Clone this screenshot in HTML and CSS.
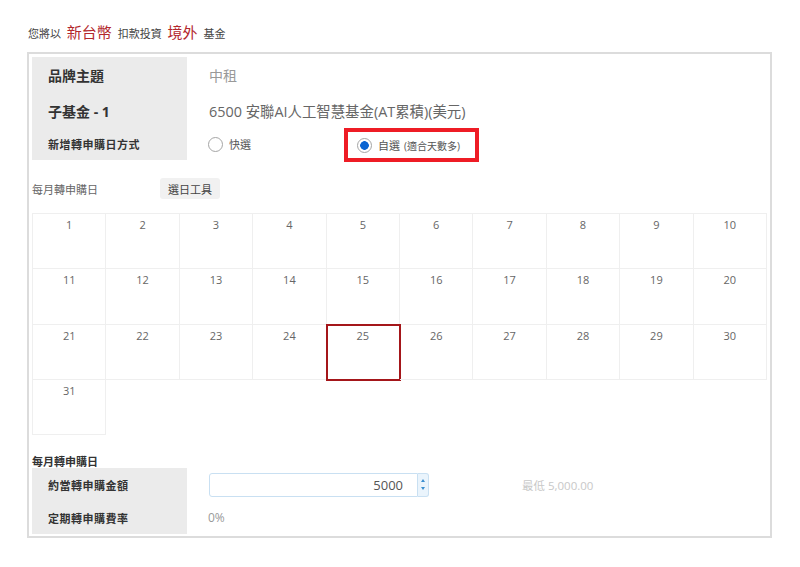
FILE: index.html
```html
<!DOCTYPE html>
<html lang="zh-Hant">
<head>
    <meta charset="UTF-8">
    <meta name="viewport" content="width=device-width, initial-scale=1.0">
    <title>定期轉申購</title>
    <link rel="stylesheet" href="styles.css">
</head>
<body>
    <!-- summary line -->
    <div class="summary">
        您將以 <span class="hl">新台幣</span> 扣款投資 <span class="hl">境外</span> 基金
    </div>

    <div class="box">
        <div class="info">
            <div class="info-row r1">
                <div class="label big">品牌主題</div>
                <div class="value light">中租</div>
            </div>
            <div class="info-row r2">
                <div class="label big">子基金 - 1</div>
                <div class="value fund">6500 安聯AI人工智慧基金(AT累積)(美元)</div>
            </div>
            <div class="info-row r3">
                <div class="label">新增轉申購日方式</div>
                <div class="value options">
                    <label class="opt"><span class="radio"></span>快選</label>
                    <label class="opt marked"><span class="radio on"></span>自選 <small>(適合天數多)</small></label>
                </div>
            </div>
        </div>

        <div class="day-bar">
            <span class="day-label">每月轉申購日</span>
            <button class="tool-btn">選日工具</button>
        </div>

        <div class="calendar" id="calendar"></div>

        <div class="sub-title">每月轉申購日</div>
        <div class="info">
            <div class="info-row r4">
                <div class="label">約當轉申購金額</div>
                <div class="value">
                    <div class="amount">
                        <span class="amount-val">5000</span>
                    </div>
                    <span class="spin"><i class="up"></i><i class="down"></i></span>
                    <span class="min">最低 5,000.00</span>
                </div>
            </div>
            <div class="info-row r5">
                <div class="label">定期轉申購費率</div>
                <div class="value light">0%</div>
            </div>
        </div>
    </div>

    <script>
        var cal = document.getElementById('calendar');
        for (var d = 1; d <= 31; d++) {
            var cell = document.createElement('div');
            cell.className = 'day' + (d === 25 ? ' picked' : '');
            cell.textContent = d;
            cal.appendChild(cell);
        }
    </script>
</body>
</html>
```

FILE: styles.css
```css
body {
    margin: 0;
    font-family: "Open Sans", "Noto Sans CJK TC", sans-serif;
    color: #555;
    background: #fff;
}

.summary {
    padding: 22px 0 0 28px;
    height: 20px;
    line-height: 20px;
    font-size: 11px;
    color: #444;
    margin-bottom: 10px;
}

.summary .hl {
    font-size: 15px;
    color: #b3282d;
    margin: 0 3px;
}

.box {
    margin-left: 27px;
    width: 745px;
    box-sizing: border-box;
    border: 2px solid #dcdcdc;
    padding: 3px 3px 2px 3px;
}

.info-row {
    display: flex;
    align-items: stretch;
}

.info-row.r1 { height: 36px; }
.info-row.r2 { height: 35px; }
.info-row.r3 { height: 32px; }
.info-row.r4 { height: 33px; }
.info-row.r5 { height: 33px; }

.label {
    width: 155px;
    flex: none;
    box-sizing: border-box;
    padding-left: 16px;
    background: #ebebeb;
    display: flex;
    align-items: center;
    font-size: 11px;
    font-weight: bold;
    color: #333;
    letter-spacing: 0.5px;
}

.label.big {
    font-size: 14px;
    letter-spacing: 0;
}

.value {
    padding-left: 22px;
    display: flex;
    align-items: center;
    font-size: 14px;
    color: #666;
}

.value.fund {
    font-size: 14.4px;
}

.value.light {
    color: #999;
}

.r5 .value.light {
    font-size: 12px;
    padding-left: 21px;
}

.options {
    padding-left: 21px;
}

.opt {
    display: flex;
    align-items: center;
    font-size: 11px;
    color: #555;
}

.opt:first-child {
    width: 136px;
}

.opt.marked {
    border: 4px solid #ee1c25;
    width: 135px;
    box-sizing: border-box;
    margin-top: 2px;
    height: 34px;
    padding-left: 9px;
}

.opt small {
    font-size: 10px;
    margin-left: 4px;
}

.radio {
    width: 15px;
    height: 15px;
    box-sizing: border-box;
    border: 1px solid #a5a5a5;
    border-radius: 50%;
    margin-right: 6px;
    background: #fff;
}

.radio.on {
    background: radial-gradient(circle, #0a64d2 0, #0a64d2 4px, #fff 4.6px);
}

.day-bar {
    display: flex;
    align-items: center;
    margin-top: 18px;
    height: 21px;
}

.day-label {
    width: 128px;
    font-size: 11px;
    color: #666;
}

.tool-btn {
    height: 21px;
    padding: 0 8px;
    border: none;
    border-radius: 3px;
    background: #f1f1f1;
    font-family: inherit;
    font-size: 11px;
    color: #444;
}

.calendar {
    margin-top: 14px;
    display: grid;
    grid-template-columns: repeat(10, 1fr);
    grid-auto-rows: 55.3px;
    border-top: 1px solid #efefef;
    border-left: 1px solid #efefef;
}

.day {
    border-right: 1px solid #efefef;
    border-bottom: 1px solid #efefef;
    text-align: center;
    font-size: 11px;
    color: #666;
    padding-top: 3px;
}

.day.picked {
    outline: 2px solid #a4161a;
    outline-offset: -1px;
}

.sub-title {
    margin-top: 20px;
    font-size: 11px;
    line-height: 13px;
    font-weight: bold;
    color: #333;
}

.amount {
    width: 209px;
    height: 24px;
    box-sizing: border-box;
    border: 1px solid #c9e0f2;
    border-radius: 3px 0 0 3px;
    display: flex;
    align-items: center;
    justify-content: flex-end;
    padding-right: 14px;
}

.amount-val {
    font-size: 13px;
    color: #555;
}

.spin {
    width: 11px;
    height: 24px;
    box-sizing: border-box;
    border: 1px solid #c9e0f2;
    border-left: none;
    border-radius: 0 3px 3px 0;
    background: #eaf4fc;
    display: flex;
    flex-direction: column;
    align-items: center;
    justify-content: space-around;
    padding: 3px 0;
}

.spin i {
    width: 0;
    height: 0;
    border-left: 2.5px solid transparent;
    border-right: 2.5px solid transparent;
}

.spin .up {
    border-bottom: 3px solid #3b8fd0;
}

.spin .down {
    border-top: 3px solid #3b8fd0;
}

.min {
    margin-left: 93px;
    font-size: 11.5px;
    color: #c8c8c8;
}
```
